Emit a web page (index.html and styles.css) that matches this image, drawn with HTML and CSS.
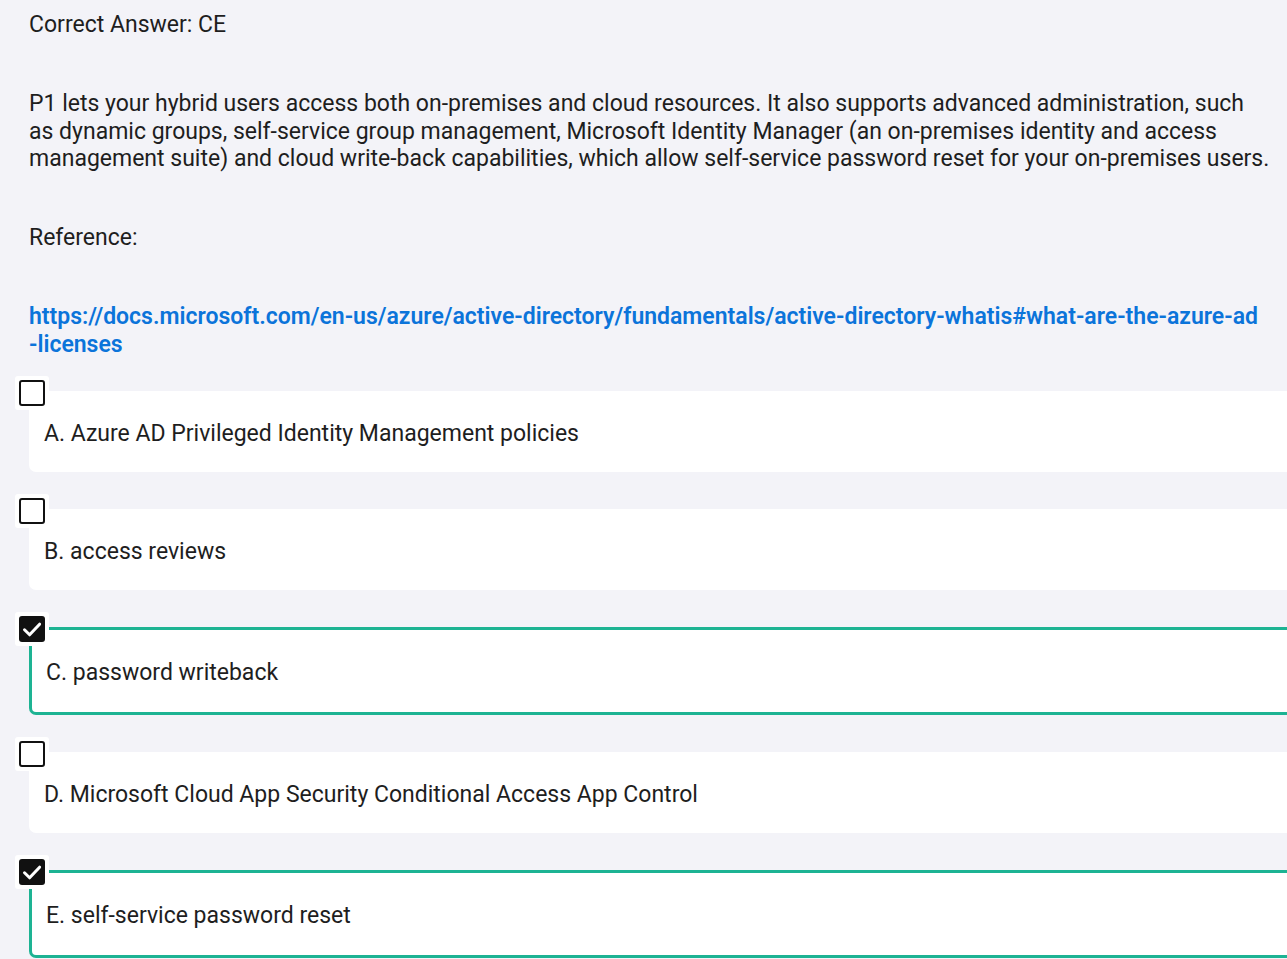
FILE: index.html
```html
<!DOCTYPE html>
<html lang="en">
<head>
<meta charset="utf-8">
<title>Question</title>
<link rel="stylesheet" href="styles.css">
</head>
<body>
<main class="page">
  <p class="block">Correct Answer: CE</p>
  <p class="block">P1 lets your hybrid users access both on-premises and cloud resources. It also supports advanced administration, such as dynamic groups, self-service group management, Microsoft Identity Manager (an on-premises identity and access management suite) and cloud write-back capabilities, which allow self-service password reset for your on-premises users.</p>
  <p class="block">Reference:</p>
  <p class="block"><a class="link" href="#">https://docs.microsoft.com/en-us/azure/active-directory/fundamentals/active-directory-whatis#what-are-the-azure-ad<br>-licenses</a></p>

  <ul class="options">
    <li class="option">
      <span class="box"><span class="check"></span></span>
      <div class="card">A. Azure AD Privileged Identity Management policies</div>
    </li>
    <li class="option">
      <span class="box"><span class="check"></span></span>
      <div class="card">B. access reviews</div>
    </li>
    <li class="option selected">
      <span class="box"><span class="check"><svg viewBox="0 0 26 26" width="26" height="26"><path d="M5.5 13.8 L10.6 18.8 L20.6 8.2" fill="none" stroke="#fff" stroke-width="3" stroke-linecap="round" stroke-linejoin="round"/></svg></span></span>
      <div class="card">C. password writeback</div>
    </li>
    <li class="option">
      <span class="box"><span class="check"></span></span>
      <div class="card">D. Microsoft Cloud App Security Conditional Access App Control</div>
    </li>
    <li class="option selected">
      <span class="box"><span class="check"><svg viewBox="0 0 26 26" width="26" height="26"><path d="M5.5 13.8 L10.6 18.8 L20.6 8.2" fill="none" stroke="#fff" stroke-width="3" stroke-linecap="round" stroke-linejoin="round"/></svg></span></span>
      <div class="card">E. self-service password reset</div>
    </li>
  </ul>
</main>
</body>
</html>
```

FILE: styles.css
```css
html, body {
  margin: 0;
  padding: 0;
  overflow: hidden;
  background: #f3f3f8;
}

body {
  font-family: Roboto, "Noto Sans", sans-serif;
  font-size: 23px;
  color: #1e1e1e;
}

.page {
  padding: 11px 0 0 29px;
}

.block {
  margin: 0 0 51.5px 0;
  line-height: 27.5px;
  padding-right: 14px;
}

.link {
  color: #0b74da;
  font-weight: 600;
  text-decoration: none;
}

.options {
  list-style: none;
  margin: -29px 0 0 0;
  padding: 0;
}

.option {
  position: relative;
  padding-top: 10px;
  margin-bottom: 27px;
  margin-right: -20px;
}

.box {
  position: absolute;
  left: -14px;
  top: -5px;
  width: 34px;
  height: 34px;
  background: #ffffff;
  border-radius: 3px;
  display: flex;
  align-items: center;
  justify-content: center;
  z-index: 1;
}

.check {
  box-sizing: border-box;
  width: 26px;
  height: 26px;
  border: 2.5px solid #111;
  border-radius: 3px;
  display: flex;
}

.selected .check {
  background: #111;
  border: none;
}

.card {
  background: #ffffff;
  border-radius: 7px;
  height: 81px;
  box-sizing: border-box;
  padding: 29px 0 0 15px;
  line-height: 27px;
}

.selected .card {
  height: 88px;
  border: 3px solid #1db393;
  padding: 29px 0 0 14px;
}
```
